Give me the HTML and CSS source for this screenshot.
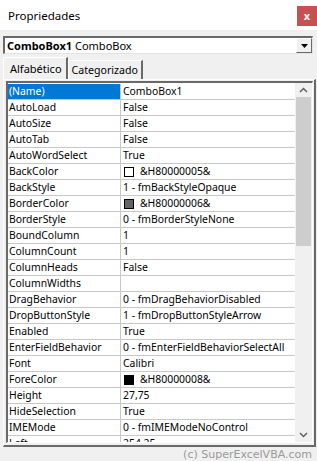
FILE: index.html
```html
<!DOCTYPE html>
<html lang="pt">
<head>
  <meta charset="UTF-8" />
  <title>Propriedades</title>
  <link rel="stylesheet" href="styles.css">
</head>
<body>

  <div class="titlebar">
    <span class="title">Propriedades</span>
    <span class="close">x</span>
  </div>

  <div class="combo">
    <span class="combo-text"><b>ComboBox1</b> ComboBox</span>
    <span class="combo-btn"><svg width="7" height="4" viewBox="0 0 7 4"><path d="M0 0h7L3.5 4z" fill="#000"/></svg></span>
  </div>

  <div class="tabs">
    <div class="tab active">Alfabético</div>
    <div class="tab">Categorizado</div>
  </div>

  <div class="panel">
    <div class="grid-wrap">
      <div class="grid">
        <div class="row sel"><span class="name">(Name)</span><span class="val">ComboBox1</span></div>
        <div class="row"><span class="name">AutoLoad</span><span class="val">False</span></div>
        <div class="row"><span class="name">AutoSize</span><span class="val">False</span></div>
        <div class="row"><span class="name">AutoTab</span><span class="val">False</span></div>
        <div class="row"><span class="name">AutoWordSelect</span><span class="val">True</span></div>
        <div class="row"><span class="name">BackColor</span><span class="val"><i class="swatch white"></i>&amp;H80000005&amp;</span></div>
        <div class="row"><span class="name">BackStyle</span><span class="val">1 - fmBackStyleOpaque</span></div>
        <div class="row"><span class="name">BorderColor</span><span class="val"><i class="swatch gray"></i>&amp;H80000006&amp;</span></div>
        <div class="row"><span class="name">BorderStyle</span><span class="val">0 - fmBorderStyleNone</span></div>
        <div class="row"><span class="name">BoundColumn</span><span class="val">1</span></div>
        <div class="row"><span class="name">ColumnCount</span><span class="val">1</span></div>
        <div class="row"><span class="name">ColumnHeads</span><span class="val">False</span></div>
        <div class="row"><span class="name">ColumnWidths</span><span class="val"></span></div>
        <div class="row"><span class="name">DragBehavior</span><span class="val">0 - fmDragBehaviorDisabled</span></div>
        <div class="row"><span class="name">DropButtonStyle</span><span class="val">1 - fmDropButtonStyleArrow</span></div>
        <div class="row"><span class="name">Enabled</span><span class="val">True</span></div>
        <div class="row"><span class="name">EnterFieldBehavior</span><span class="val">0 - fmEnterFieldBehaviorSelectAll</span></div>
        <div class="row"><span class="name">Font</span><span class="val">Calibri</span></div>
        <div class="row"><span class="name">ForeColor</span><span class="val"><i class="swatch black"></i>&amp;H80000008&amp;</span></div>
        <div class="row"><span class="name">Height</span><span class="val">27,75</span></div>
        <div class="row"><span class="name">HideSelection</span><span class="val">True</span></div>
        <div class="row"><span class="name">IMEMode</span><span class="val">0 - fmIMEModeNoControl</span></div>
        <div class="row"><span class="name">Left</span><span class="val">254,25</span></div>
      </div>
      <div class="scrollbar">
        <span class="arrow"><svg width="9" height="6" viewBox="0 0 9 6"><path d="M1 5l3.5-3.5L8 5" fill="none" stroke="#606060" stroke-width="1.5"/></svg></span>
        <span class="track"><span class="thumb"></span></span>
        <span class="arrow"><svg width="9" height="6" viewBox="0 0 9 6"><path d="M1 1l3.5 3.5L8 1" fill="none" stroke="#606060" stroke-width="1.5"/></svg></span>
      </div>
    </div>
  </div>

  <div class="credit">(c) SuperExcelVBA.com</div>

</body>
</html>
```

FILE: styles.css
```css
body {
  margin: 0;
  background: #f0f0f0;
  font-family: 'Noto Sans', sans-serif;
  font-size: 10.4px;
  color: #000;
  width: 317px;
  height: 461px;
  overflow: hidden;
}
.titlebar {
  height: 30px;
  background: #fff;
  display: flex;
  align-items: center;
  justify-content: space-between;
}
.title {
  margin-left: 8px;
  font-size: 11.5px;
}
.close {
  width: 20px;
  height: 20px;
  margin-top: 2px;
  background: #c75050;
  color: #fff;
  font-weight: bold;
  font-size: 11px;
  display: flex;
  align-items: center;
  justify-content: center;
  line-height: 1;
  padding-bottom: 2px;
  box-sizing: border-box;
}
.combo {
  margin: 6px 4px 0 3px;
  height: 18px;
  box-sizing: border-box;
  background: #fff;
  border-top: 2px solid #696969;
  border-left: 2px solid #696969;
  border-right: 1px solid #e3e3e3;
  border-bottom: 1px solid #e3e3e3;
  display: flex;
  align-items: center;
  justify-content: space-between;
}
.combo-text {
  padding-left: 2px;
  font-size: 11px;
}
.combo-btn {
  width: 16px;
  height: 15px;
  box-sizing: border-box;
  background: #f0f0f0;
  border-top: 1px solid #fff;
  border-left: 1px solid #fff;
  border-right: 1px solid #696969;
  border-bottom: 1px solid #696969;
  display: flex;
  align-items: center;
  justify-content: center;
}
.tabs {
  display: flex;
  margin: 3px 0 0 3px;
  height: 22px;
  align-items: flex-end;
}
.tab {
  height: 19px;
  box-sizing: border-box;
  padding: 2px 3px 0 3px;
  border-top: 1px solid #fff;
  border-left: 1px solid #fff;
  border-right: 2px solid #696969;
  font-size: 10.6px;
}
.tab.active {
  height: 22px;
  padding: 3px 4px 0 6px;
  font-size: 11px;
}
.panel {
  margin: 0 1px 0 3px;
  height: 368px;
  box-sizing: border-box;
  border-top: 1px solid #fff;
  border-left: 1px solid #fff;
  border-right: 2px solid #696969;
  border-bottom: 2px solid #696969;
  padding: 1px 1px 2px 2px;
}
.grid-wrap {
  height: 100%;
  box-sizing: border-box;
  border-top: 2px solid #696969;
  border-left: 2px solid #696969;
  border-right: 1px solid #fff;
  border-bottom: 1px solid #fff;
  background: #fff;
  display: flex;
  overflow: hidden;
}
.grid {
  flex: 1;
  padding-top: 1px;
}
.row {
  display: flex;
  height: 16px;
  box-sizing: border-box;
  border-bottom: 1px solid #c8c8c8;
  line-height: 15px;
}
.name {
  width: 113px;
  box-sizing: border-box;
  padding-left: 1px;
  border-right: 1px solid #c8c8c8;
  white-space: nowrap;
  overflow: hidden;
}
.val {
  flex: 1;
  padding-left: 2px;
  white-space: nowrap;
  overflow: hidden;
  display: flex;
  align-items: center;
}
.sel .name {
  background: #0078d7;
  color: #fff;
}
.swatch {
  display: inline-block;
  width: 10px;
  height: 10px;
  box-sizing: border-box;
  border: 1px solid #000;
  margin: 0 6px 0 1px;
}
.swatch.white { background: #fff; }
.swatch.gray { background: #646464; }
.swatch.black { background: #000; }
.scrollbar {
  width: 17px;
  background: #f0f0f0;
  display: flex;
  flex-direction: column;
}
.arrow {
  height: 14px;
  display: flex;
  align-items: center;
  justify-content: center;
}
.track {
  flex: 1;
  padding: 0 1px;
}
.thumb {
  display: block;
  height: 149px;
  background: #cdcdcd;
}
.credit {
  text-align: right;
  margin: 1px 5px 0 0;
  font-family: 'DejaVu Sans', sans-serif;
  font-size: 11px;
  line-height: 13px;
  color: #9a9a9a;
}
```
